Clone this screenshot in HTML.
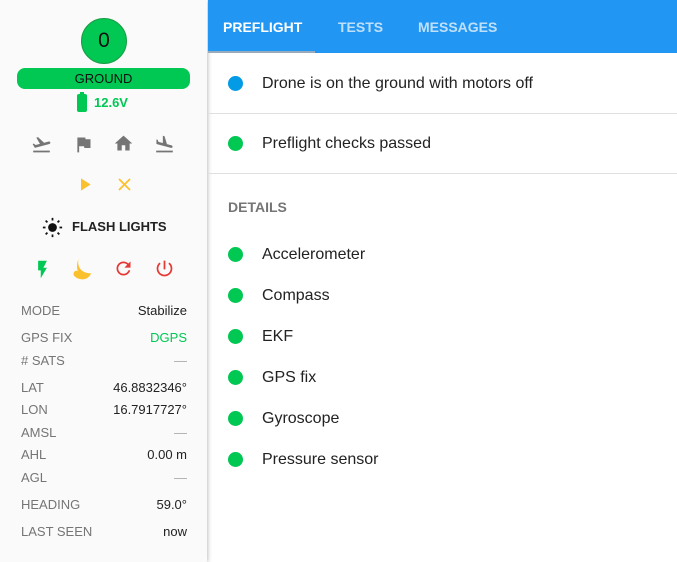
<!DOCTYPE html>
<html><head><style>
*{margin:0;padding:0;box-sizing:border-box}
body{width:677px;height:562px;overflow:hidden;background:#fff;font-family:"Liberation Sans",sans-serif;position:relative}
#side{position:absolute;left:0;top:0;width:207px;height:562px;background:#fafafa;box-shadow:1px 0 4px rgba(0,0,0,.25)}
.a{position:absolute}
.ic{position:absolute;width:21px;height:21px}
.lbl{position:absolute;left:21px;font-size:13px;color:#757575}
.val{position:absolute;right:20px;font-size:13px;color:#222;text-align:right}
#tabs{position:absolute;left:208px;top:0;width:469px;height:53px;background:#2196f3}
.tab{position:absolute;top:19px;font-size:14px;font-weight:bold;color:#bfe0fb}
.row{position:absolute;left:262px;font-size:16px;color:#222}
.dot{position:absolute;left:228px;width:15px;height:15px;border-radius:50%;background:#00c853}
.hr{position:absolute;left:208px;width:469px;height:1px;background:#e0e0e0}
</style></head><body>
<div id="side">
 <div class="a" style="left:81px;top:18px;width:46px;height:46px;border-radius:50%;background:#00c853;border:1px solid #1a9c45;text-align:center;line-height:44px;font-size:21px;color:#111">0</div>
 <div class="a" style="left:17px;top:68px;width:173px;height:21px;border-radius:8px;background:#00c853;text-align:center;line-height:21px;font-size:13px;color:#111">GROUND</div>
 <div class="a" style="left:77px;top:94px;width:10px;height:18px;background:#00c853;border-radius:2px"></div>
 <div class="a" style="left:80px;top:92px;width:4px;height:3px;background:#00c853"></div>
 <div class="a" style="left:94px;top:95px;font-size:13px;font-weight:bold;color:#00c853">12.6V</div>
 <svg class="ic" style="left:31px;top:134px" viewBox="0 0 24 24" fill="#757575"><path d="M2.5 19h19v2h-19zm19.57-9.36c-.21-.8-1.04-1.28-1.84-1.060L14.92 10l-6.9-6.43-1.930.51 4.14 7.17-4.97 1.33-1.970-1.54-1.45.39 1.82 3.16.77 1.33 1.6-.43 5.31-1.42 4.35-1.16L21 11.49c.81-.23 1.28-1.05 1.07-1.85z"/></svg>
 <svg class="ic" style="left:73px;top:134px" viewBox="0 0 24 24" fill="#757575"><path d="M14.4 6L14 4H5v17h2v-7h5.6l.4 2h7V6z"/></svg>
 <svg class="ic" style="left:113px;top:133px" viewBox="0 0 24 24" fill="#757575"><path d="M10 20v-6h4v6h5v-8h3L12 3 2 12h3v8z"/></svg>
 <svg class="ic" style="left:154px;top:134px" viewBox="0 0 24 24" fill="#757575"><path d="M2.5 19h19v2h-19zm7.18-5.73l4.35 1.16 5.31 1.42c.8.21 1.62-.26 1.84-1.06.21-.8-.26-1.62-1.06-1.84l-5.31-1.42-2.76-9.02L10.12 2v8.28L5.15 8.95l-.93-2.32-1.45-.39v5.17l1.6.43 5.31 1.43z"/></svg>
 <svg class="ic" style="left:74px;top:174px" viewBox="0 0 24 24" fill="#fbc02d"><path d="M8 5v14l11-7z"/></svg>
 <svg class="ic" style="left:114px;top:174px" viewBox="0 0 24 24" fill="#fbc02d"><path d="M19 6.41L17.59 5 12 10.59 6.41 5 5 6.41 10.59 12 5 17.590 6.41 19 12 13.41 17.59 19 19 17.59 13.41 12z"/></svg>
 <svg class="ic" style="left:42px;top:217px" viewBox="0 0 24 24" fill="#111"><circle cx="12" cy="12" r="5"/><g stroke="#111" stroke-width="2"><path d="M12 1v3M12 20v3M1 12h3M20 12h3M4.2 4.2l2 2M17.8 17.8l2 2M4.2 19.8l2-2M17.8 6.2l2-2"/></g></svg>
 <div class="a" style="left:72px;top:219px;font-size:13px;font-weight:bold;color:#222">FLASH LIGHTS</div>
 <svg class="ic" style="left:32px;top:259px" viewBox="0 0 24 24" fill="#00c853"><path d="M7 2v11h3v9l7-12h-4l4-8z"/></svg>
 <svg class="ic" style="left:71px;top:258px;width:23px;height:23px" viewBox="0 0 24 24" fill="#fbc02d"><path d="M8 1C6 8 10 16 21 16c-2 5-7 7-11 6-2 0-4-1-5-2-2-1-3-3-2-5 1-2 3-2 4-1-1-5-1-9 1-13z"/></svg>
 <svg class="ic" style="left:113px;top:258px" viewBox="0 0 24 24" fill="#e53935"><path d="M17.65 6.35C16.2 4.9 14.21 4 12 4c-4.42 0-7.99 3.58-7.99 8s3.57 8 7.99 8c3.730 0 6.84-2.55 7.73-6h-2.08c-.82 2.33-3.04 4-5.65 4-3.31 0-6-2.69-6-6s2.69-6 6-6c1.66 0 3.14.69 4.22 1.78L13 11h7V4l-2.35 2.35z"/></svg>
 <svg class="ic" style="left:154px;top:258px" viewBox="0 0 24 24" fill="#e53935"><path d="M13 3h-2v10h2V3zm4.83 2.17l-1.42 1.42C17.99 7.86 19 9.81 19 12c0 3.87-3.13 7-7 7s-7-3.13-7-7c0-2.19 1.01-4.14 2.58-5.42L6.170 5.17C4.23 6.82 3 9.26 3 12c0 4.97 4.03 9 9 9s9-4.03 9-9c0-2.740-1.23-5.18-3.17-6.83z"/></svg>
 <div class="lbl" style="top:303px">MODE</div><div class="val" style="top:303px">Stabilize</div>
 <div class="lbl" style="top:330px">GPS FIX</div><div class="val" style="top:330px;color:#00c853">DGPS</div>
 <div class="lbl" style="top:353px"># SATS</div><div class="val" style="top:353px;color:#aaa">—</div>
 <div class="lbl" style="top:380px">LAT</div><div class="val" style="top:380px">46.8832346°</div>
 <div class="lbl" style="top:402px">LON</div><div class="val" style="top:402px">16.7917727°</div>
 <div class="lbl" style="top:425px">AMSL</div><div class="val" style="top:425px;color:#aaa">—</div>
 <div class="lbl" style="top:447px">AHL</div><div class="val" style="top:447px">0.00 m</div>
 <div class="lbl" style="top:470px">AGL</div><div class="val" style="top:470px;color:#aaa">—</div>
 <div class="lbl" style="top:497px">HEADING</div><div class="val" style="top:497px">59.0°</div>
 <div class="lbl" style="top:524px">LAST SEEN</div><div class="val" style="top:524px">now</div>
</div>
<div id="tabs">
 <div class="tab" style="left:15px;color:#fff">PREFLIGHT</div>
 <div class="tab" style="left:130px">TESTS</div>
 <div class="tab" style="left:210px">MESSAGES</div>
 <div class="a" style="left:0;top:51px;width:107px;height:2px;background:#9ab"></div>
</div>
<div class="dot" style="top:76px;background:#039be5"></div>
<div class="row" style="top:75px">Drone is on the ground with motors off</div>
<div class="hr" style="top:113px"></div>
<div class="dot" style="top:136px"></div>
<div class="row" style="top:135px">Preflight checks passed</div>
<div class="hr" style="top:173px"></div>
<div class="a" style="left:228px;top:199px;font-size:14px;font-weight:bold;color:#757575">DETAILS</div>
<div class="dot" style="top:247px"></div><div class="row" style="top:246px">Accelerometer</div>
<div class="dot" style="top:288px"></div><div class="row" style="top:287px">Compass</div>
<div class="dot" style="top:329px"></div><div class="row" style="top:328px">EKF</div>
<div class="dot" style="top:370px"></div><div class="row" style="top:369px">GPS fix</div>
<div class="dot" style="top:411px"></div><div class="row" style="top:410px">Gyroscope</div>
<div class="dot" style="top:452px"></div><div class="row" style="top:451px">Pressure sensor</div>
</body></html>
